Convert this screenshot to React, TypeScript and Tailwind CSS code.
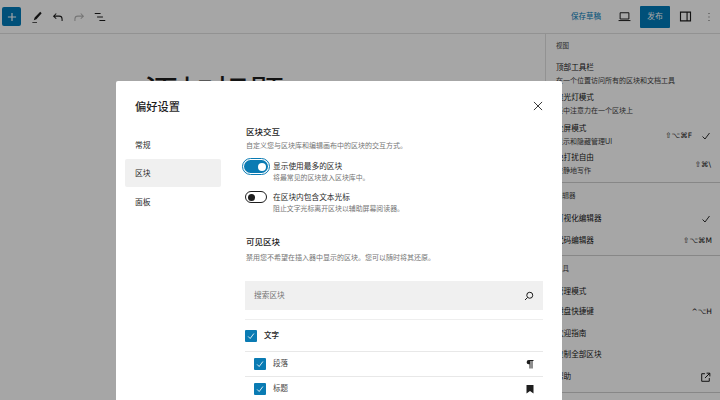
import type { FC } from 'react';

const font = "font-['Inter','Noto_Sans_CJK_SC',sans-serif]";

const Check = () => (
  <svg viewBox="0 0 24 24" className="h-[12px] w-[12px]" fill="none" stroke="currentColor" strokeWidth="1.8">
    <path d="M5 13l5 5L19 6" />
  </svg>
);

const MenuRow: FC<{ title: string; sub?: string; shortcut?: string; check?: boolean; ext?: boolean; className?: string }> = ({
  title,
  sub,
  shortcut,
  check,
  ext,
  className = '',
}) => (
  <div className={`flex items-center justify-between ${className}`}>
    <div>
      <div className="text-[7.6px] leading-[12px] text-[#161616]">{title}</div>
      {sub && <div className="mt-[1px] text-[7px] leading-[12px] text-[#3e3e3e]">{sub}</div>}
    </div>
    <div className="flex items-center gap-[8px] text-[#161616]">
      {shortcut && <span className="font-['DejaVu_Sans',sans-serif] text-[7.5px]">{shortcut}</span>}
      {check && <Check />}
      {ext && (
        <svg viewBox="0 0 24 24" className="h-[13px] w-[13px]" fill="none" stroke="currentColor" strokeWidth="1.8">
          <path d="M11 5H5v14h14v-6M14 4h6v6M20 4l-9 9" />
        </svg>
      )}
    </div>
  </div>
);

const Box = () => (
  <span className="flex h-[12px] w-[12px] shrink-0 items-center justify-center rounded-[1px] bg-[#0a7bb3] text-white">
    <svg viewBox="0 0 24 24" className="h-[10px] w-[10px]" fill="none" stroke="currentColor" strokeWidth="2">
      <path d="M5 13l5 5L19 6" />
    </svg>
  </span>
);

const Toggle: FC<{ on?: boolean }> = ({ on }) =>
  on ? (
    <span className="flex h-[13px] w-[24px] shrink-0 items-center justify-end rounded-full bg-[#0a7bb3] pr-[2px] outline outline-[1px] outline-offset-[1px] outline-[#0a7bb3]">
      <span className="h-[8px] w-[8px] rounded-full bg-white" />
    </span>
  ) : (
    <span className="flex h-[12px] w-[22px] shrink-0 items-center rounded-full border border-[#1e1e1e] bg-white pl-[2px]">
      <span className="h-[7px] w-[7px] rounded-full bg-[#1e1e1e]" />
    </span>
  );

const ToggleRow: FC<{ on?: boolean; label: string; sub: string; className?: string }> = ({ on, label, sub, className = '' }) => (
  <div className={`flex gap-[6px] ${className}`}>
    <div className="flex w-[23px] justify-center pt-[1px]">
      <Toggle on={on} />
    </div>
    <div className="pt-[2px]">
      <div className="text-[7.7px] leading-[12px] text-[#2a2a2a]">{label}</div>
      <div className="text-[6.9px] leading-[10px] text-[#757575]">{sub}</div>
    </div>
  </div>
);

export default function App() {
  return (
    <div className={`relative h-[400px] w-[720px] overflow-hidden bg-white ${font}`}>
      {/* editor behind the overlay */}
      <header className="flex h-[34px] items-center border-b border-[#e0e0e0] pl-[2px] pr-[4px]">
        <button className="flex h-[19px] w-[19px] items-center justify-center rounded-[2px] bg-[#007cba] text-white">
          <svg viewBox="0 0 24 24" className="h-[14px] w-[14px]" fill="none" stroke="currentColor" strokeWidth="2">
            <path d="M12 5v14M5 12h14" />
          </svg>
        </button>
        <div className="ml-[9px] flex items-center gap-[7px] text-[#1e1e1e]">
          <svg viewBox="0 0 24 24" className="h-[14px] w-[14px]" fill="currentColor">
            <path d="M20 5.500 17.500 3 8 13l-1.500 4.500L11 16zM4 20.500h8V22H4z" />
          </svg>
          <svg viewBox="0 0 24 24" className="h-[14px] w-[14px]" fill="none" stroke="currentColor" strokeWidth="1.8">
            <path d="M9 6 4.500 10.500 9 15M5 10.500h9a5 5 0 0 1 5 5V19" />
          </svg>
          <svg viewBox="0 0 24 24" className="h-[14px] w-[14px] text-[#b5b5b5]" fill="none" stroke="currentColor" strokeWidth="1.8">
            <path d="M15 6l4.500 4.500L15 15M19 10.500h-9a5 5 0 0 0-5 5V19" />
          </svg>
          <svg viewBox="0 0 24 24" className="h-[14px] w-[14px]" fill="none" stroke="currentColor" strokeWidth="1.8">
            <path d="M3 6h10M7 12h10M11 18h10" />
          </svg>
        </div>
        <div className="ml-auto flex items-center">
          <span className="text-[7.5px] text-[#007cba]">保存草稿</span>
          <svg viewBox="0 0 24 24" className="ml-[16px] h-[15px] w-[15px] text-[#1e1e1e]" fill="none" stroke="currentColor" strokeWidth="1.6">
            <path d="M5 6h14v10H5zM2.500 18.500h19" />
          </svg>
          <span className="ml-[8px] flex h-[22px] w-[30px] items-center justify-center rounded-[1px] bg-[#007cba] text-[7.8px] text-white">发布</span>
          <svg viewBox="0 0 24 24" className="ml-[8px] h-[15px] w-[15px] text-[#1e1e1e]" fill="none" stroke="currentColor" strokeWidth="1.8">
            <path d="M4 5h16v14H4zM14.500 5v14" />
          </svg>
          <svg viewBox="0 0 24 24" className="ml-[9px] h-[14px] w-[14px] text-[#777]" fill="currentColor">
            <path d="M11 5h2v2h-2zM11 11h2v2h-2zM11 17h2v2h-2z" />
          </svg>
        </div>
      </header>

      <div className="flex h-[366px]">
        <main className="flex-1 pl-[144px] pt-[37px]">
          <h1 className="text-[35px] leading-[44px] text-[#1e1e1e]">添加标题</h1>
        </main>
        <aside className="w-[175px] border-l border-[#e0e0e0] pl-[10px] pr-[8px]">
          <div className="pt-[7px] text-[6.5px] leading-[10px] text-[#444]">视图</div>
          <MenuRow className="mt-[11px]" title="顶部工具栏" sub="在一个位置访问所有的区块和文档工具" />
          <MenuRow className="mt-[5px]" title="聚光灯模式" sub="集中注意力在一个区块上" />
          <MenuRow className="mt-[6px]" title="全屏模式" sub="显示和隐藏管理UI" shortcut="⇧⌥⌘F" check />
          <MenuRow className="mt-[4px] pr-[1px]" title="免打扰自由" sub="安静地写作" shortcut="⇧⌘\" />
          <div className="-ml-[10px] -mr-[8px] mt-[5px] border-t border-[#d0d0d0]" />
          <div className="pt-[8px] text-[6.5px] leading-[10px] text-[#444]">编辑器</div>
          <MenuRow className="mt-[12px] h-[12px]" title="可视化编辑器" check />
          <MenuRow className="mt-[10px] h-[12px]" title="代码编辑器" shortcut="⇧⌥⌘M" />
          <div className="-ml-[10px] -mr-[8px] mt-[8px] border-t border-[#d0d0d0]" />
          <div className="pt-[8px] text-[6.5px] leading-[10px] text-[#444]">工具</div>
          <MenuRow className="mt-[12px] h-[12px]" title="管理模式" />
          <MenuRow className="mt-[8px] h-[12px]" title="键盘快捷键" shortcut="^⌥H" />
          <MenuRow className="mt-[10px] h-[12px]" title="欢迎指南" />
          <MenuRow className="mt-[9px] h-[12px]" title="复制全部区块" />
          <MenuRow className="mt-[10px] h-[12px]" title="帮助" ext />
          <div className="-ml-[10px] -mr-[8px] mt-[9px] border-t border-[#d0d0d0]" />
        </aside>
      </div>

      {/* overlay */}
      <div className="absolute inset-0 bg-black/35" />

      {/* preferences modal */}
      <div className="absolute left-[116px] top-[81px] h-[319px] w-[446px] overflow-hidden rounded-t-[2px] bg-white">
        <div className="flex h-[50px] items-center justify-between pl-[19px] pr-[17px]">
          <h2 className="pt-[2px] text-[11.25px] font-medium text-[#1e1e1e]">偏好设置</h2>
          <svg viewBox="0 0 24 24" className="h-[14px] w-[14px] text-[#1e1e1e]" fill="none" stroke="currentColor" strokeWidth="1.5">
            <path d="M5 5l14 14M19 5 5 19" />
          </svg>
        </div>
        <div className="flex">
          <nav className="ml-[9px] w-[96px] text-[7.8px] text-[#2a2a2a]">
            <div className="flex h-[28px] items-center pl-[10px] pt-[2px]">常规</div>
            <div className="flex h-[28px] items-center rounded-[2px] bg-[#f0f0f0] pl-[10px] pt-[2px]">区块</div>
            <div className="mt-[1px] flex h-[28px] items-center pl-[10px] pt-[2px]">面板</div>
          </nav>
          <section className="-mt-[5px] ml-[24px] w-[298px]">
            <h3 className="ml-[1px] text-[8.5px] font-medium leading-[12px] text-[#1e1e1e]">区块交互</h3>
            <p className="ml-[1px] mt-[2px] text-[7px] leading-[12px] text-[#757575]">自定义您与区块库和编辑画布中的区块的交互方式。</p>
            <ToggleRow className="mt-[7px] -ml-[1px]" on label="显示使用最多的区块" sub="将最常见的区块放入区块库中。" />
            <ToggleRow className="mt-[7px] -ml-[1px]" label="在区块内包含文本光标" sub="阻止文字光标离开区块以辅助屏幕阅读器。" />
            <h3 className="ml-[1px] mt-[22px] text-[8.5px] font-medium leading-[12px] text-[#1e1e1e]">可见区块</h3>
            <p className="ml-[1px] mt-[4px] text-[7px] leading-[12px] text-[#757575]">禁用您不希望在插入器中显示的区块。您可以随时将其还原。</p>
            <div className="mt-[17px] flex h-[29px] items-center justify-between bg-[#f0f0f0] pl-[9px] pr-[8px]">
              <span className="text-[7.7px] text-[#757575]">搜索区块</span>
              <svg viewBox="0 0 24 24" className="h-[12px] w-[12px] text-[#1e1e1e]" fill="none" stroke="currentColor" strokeWidth="2">
                <circle cx="13.500" cy="10.500" r="6" />
                <path d="M9 15l-5 5" />
              </svg>
            </div>
            <div className="mt-[9px] flex h-[32px] items-center gap-[7px] border-t border-[#eeeeee]">
              <Box />
              <span className="text-[7.5px] font-medium text-[#1e1e1e]">文字</span>
            </div>
            <div className="flex h-[25px] items-center gap-[7px] border-t border-[#e8e8e8] pl-[9px] pr-[7px]">
              <Box />
              <span className="text-[7.5px] text-[#444]">段落</span>
              <svg viewBox="0 0 24 24" className="ml-auto h-[12px] w-[12px] text-[#1e1e1e]" fill="currentColor">
                <path d="M9.500 4H19v2h-2v15h-2V6h-2v15h-2v-8.500h-1.500a4.250 4.250 0 0 1 0-8.500z" />
              </svg>
            </div>
            <div className="flex h-[25px] items-center gap-[7px] border-t border-[#e8e8e8] pl-[9px] pr-[7px]">
              <Box />
              <span className="text-[7.5px] text-[#444]">标题</span>
              <svg viewBox="0 0 24 24" className="ml-auto h-[12px] w-[12px] text-[#1e1e1e]" fill="currentColor">
                <path d="M5 4h14v17l-7-5-7 5z" />
              </svg>
            </div>
          </section>
        </div>
      </div>
    </div>
  );
}
